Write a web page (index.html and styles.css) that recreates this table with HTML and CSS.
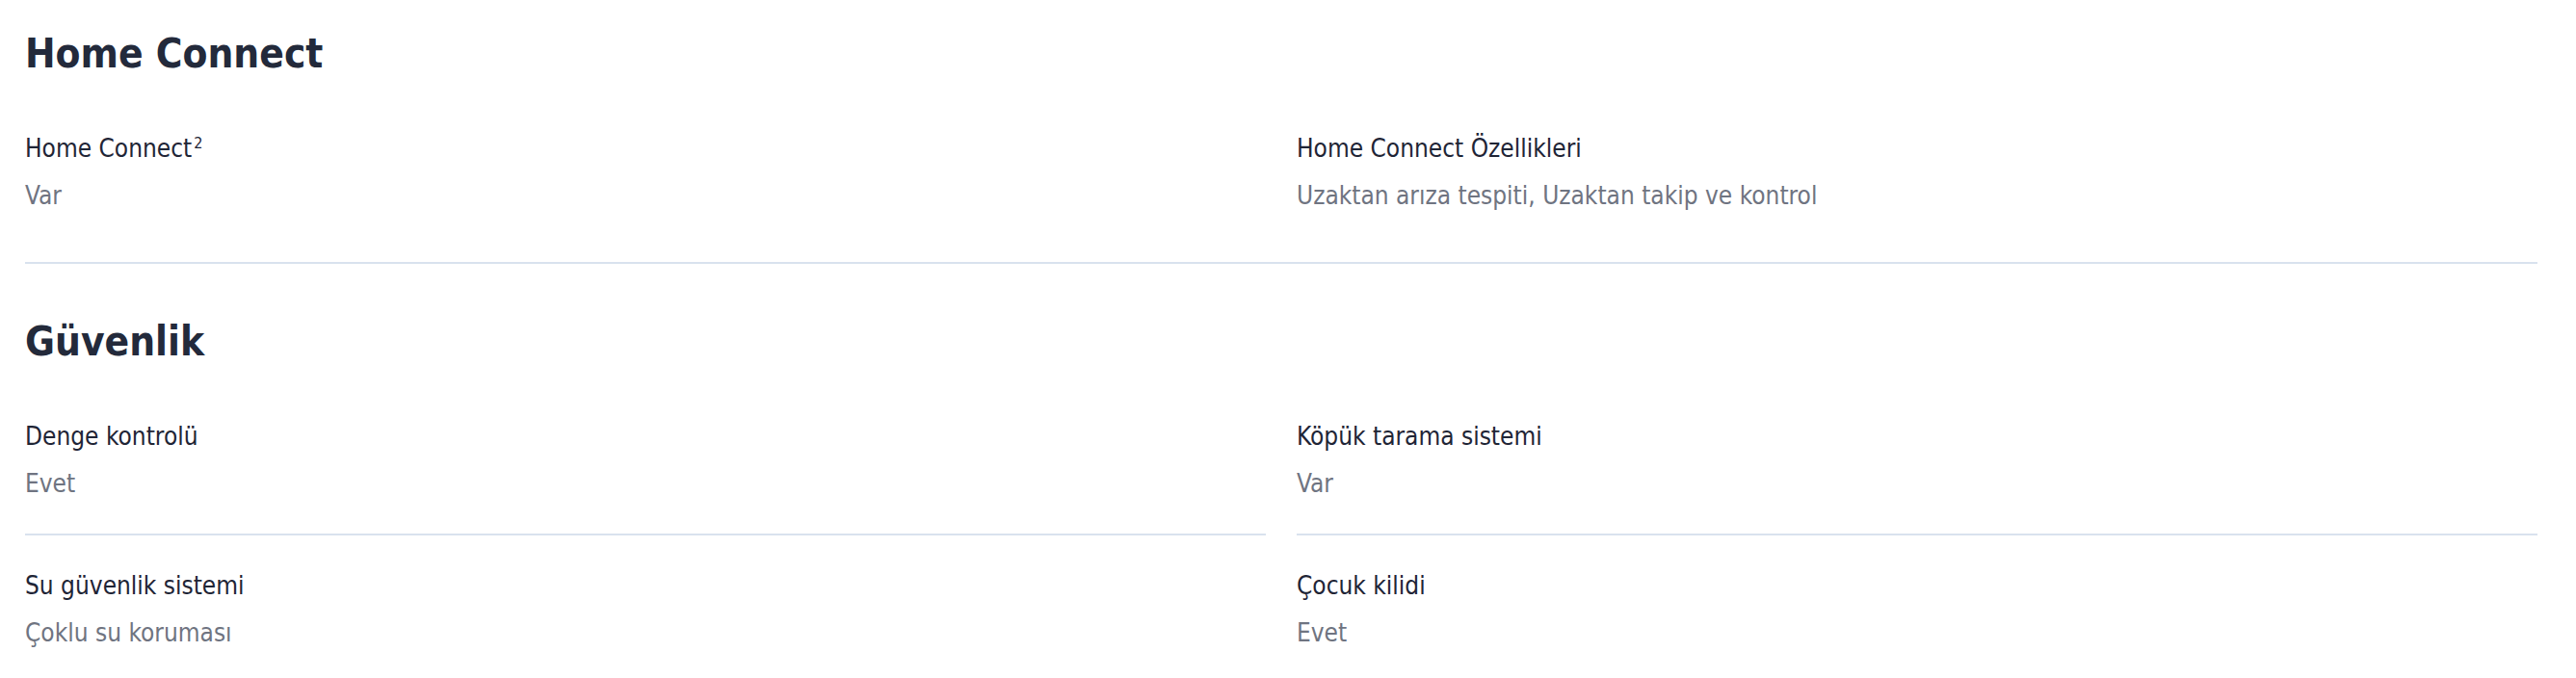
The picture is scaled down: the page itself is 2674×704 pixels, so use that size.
FILE: index.html
```html
<!DOCTYPE html>
<html lang="tr">
<head>
<meta charset="utf-8">
<title>Teknik özellikler</title>
<link rel="stylesheet" href="styles.css">
</head>
<body>
<div class="spec">
  <section class="group">
    <h2 class="group-title">Home Connect</h2>
    <div class="grid">
      <div class="item last">
        <div class="label">Home Connect<sup class="note">2</sup></div>
        <div class="value">Var</div>
      </div>
      <div class="item last">
        <div class="label">Home Connect Özellikleri</div>
        <div class="value">Uzaktan arıza tespiti, Uzaktan takip ve kontrol</div>
      </div>
    </div>
  </section>
  <section class="group">
    <h2 class="group-title">Güvenlik</h2>
    <div class="grid">
      <div class="item">
        <div class="label">Denge kontrolü</div>
        <div class="value">Evet</div>
      </div>
      <div class="item">
        <div class="label">Köpük tarama sistemi</div>
        <div class="value">Var</div>
      </div>
      <div class="item last">
        <div class="label">Su güvenlik sistemi</div>
        <div class="value">Çoklu su koruması</div>
      </div>
      <div class="item last">
        <div class="label">Çocuk kilidi</div>
        <div class="value">Evet</div>
      </div>
    </div>
  </section>
</div>
</body>
</html>
```

FILE: styles.css
```css
html, body {
  margin: 0;
  padding: 0;
  background: #ffffff;
}

body {
  font-family: "DejaVu Sans Condensed", "DejaVu Sans", sans-serif;
  font-stretch: semi-condensed;
  color: #232838;
}

.spec {
  margin-left: 26px;
  width: 2608px;
}

.group {
  padding-top: 53px;
  padding-bottom: 17px;
  border-bottom: 2px solid #d9e2ee;
}

.group:first-child {
  padding-top: 28px;
}

.group-title {
  margin: 0 0 18px 0;
  font-size: 42px;
  line-height: 56px;
  font-weight: 700;
  color: #232a3b;
}

.grid {
  display: grid;
  grid-template-columns: 1fr 1fr;
  column-gap: 32px;
}

.item {
  padding: 32px 0;
  border-bottom: 2px solid #d9e2ee;
}

.item.last {
  border-bottom: none;
}

.label {
  font-size: 26px;
  line-height: 40px;
  color: #1f2536;
}

.note {
  font-size: 16px;
  line-height: 0;
  vertical-align: 9px;
  margin-left: 2px;
}

.value {
  margin-top: 9px;
  font-size: 26px;
  line-height: 40px;
  color: #6f7481;
}
```
